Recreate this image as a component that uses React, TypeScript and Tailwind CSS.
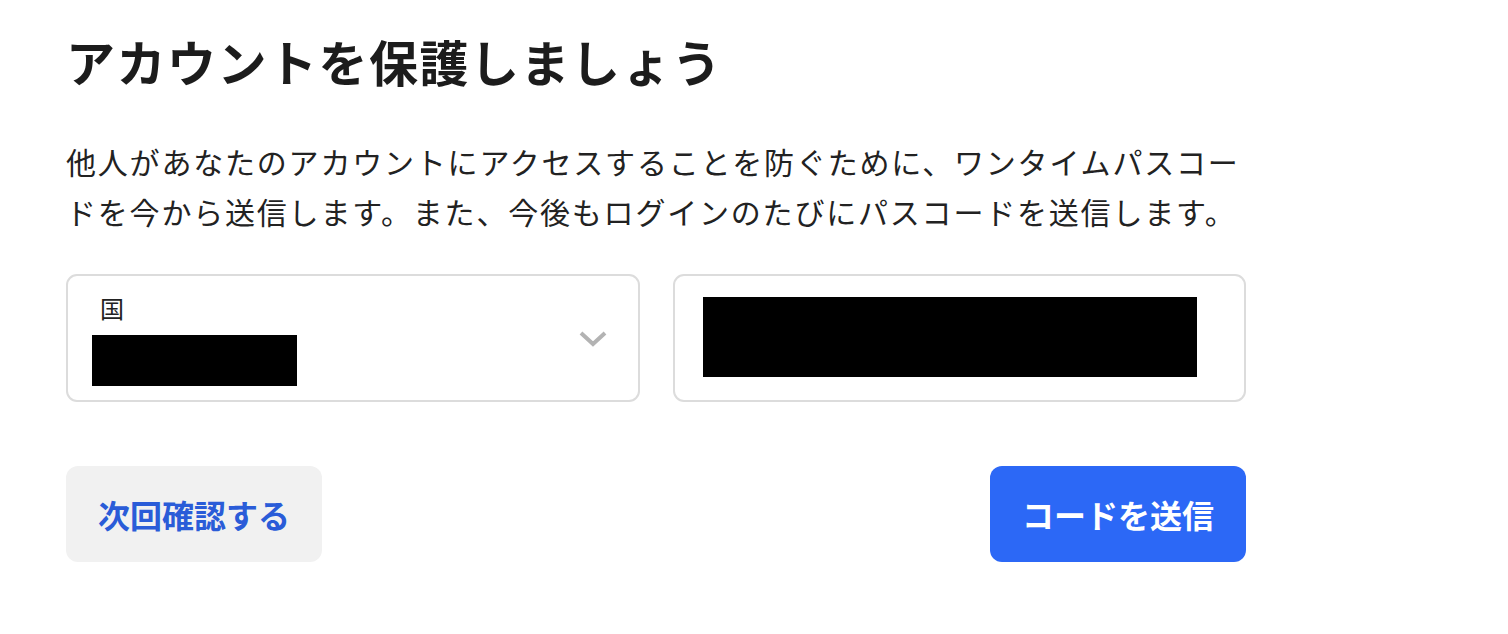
import React from "react";

export default function App() {
  return (
    <div
      className="min-h-[634px] w-[1508px] bg-white pl-[66px] pt-[29px]"
      style={{ fontFamily: '"Noto Sans CJK JP", "Noto Sans", sans-serif' }}
    >
      <div className="w-[1180px]">
        <h1 className="text-[49px] font-bold leading-[64px] tracking-[1.5px] text-[#1c1c1c]">
          アカウントを保護しましょう
        </h1>
        <p className="mt-[43px] text-[30px] leading-[50px] tracking-[1.8px] text-[#222222]">
          他人があなたのアカウントにアクセスすることを防ぐために、ワンタイムパスコードを今から送信します。また、今後もログインのたびにパスコードを送信します。
        </p>

        <div className="mt-[38px] grid grid-cols-2 gap-[33px]">
          <div className="flex h-[128px] items-center justify-between rounded-[11px] border-2 border-[#dcdcdc] pl-[24px] pr-[30px]">
            <div className="flex flex-col">
              <span className="ml-[8px] text-[24px] leading-[34px] text-[#222222]">国</span>
              <div className="mt-[10px] h-[51px] w-[205px] bg-black" />
            </div>
            <svg width="30" height="20" viewBox="0 0 30 20" className="mt-[2px]">
              <polyline
                points="3,4 15,15 27,4"
                fill="none"
                stroke="#b3b3b3"
                strokeWidth="4"
                strokeLinecap="butt"
                strokeLinejoin="miter"
              />
            </svg>
          </div>
          <div className="flex h-[128px] items-start rounded-[11px] border-2 border-[#dcdcdc] pl-[28px] pt-[21px]">
            <div className="h-[80px] w-[494px] bg-black" />
          </div>
        </div>

        <div className="mt-[64px] flex items-center justify-between">
          <button className="flex h-[96px] w-[256px] items-center justify-center rounded-[12px] bg-[#f1f1f1] text-[32px] font-bold text-[#2a5cd8]">
            次回確認する
          </button>
          <button className="flex h-[96px] w-[256px] items-center justify-center rounded-[12px] bg-[#2c68f6] text-[32px] font-bold text-white">
            コードを送信
          </button>
        </div>
      </div>
    </div>
  );
}
